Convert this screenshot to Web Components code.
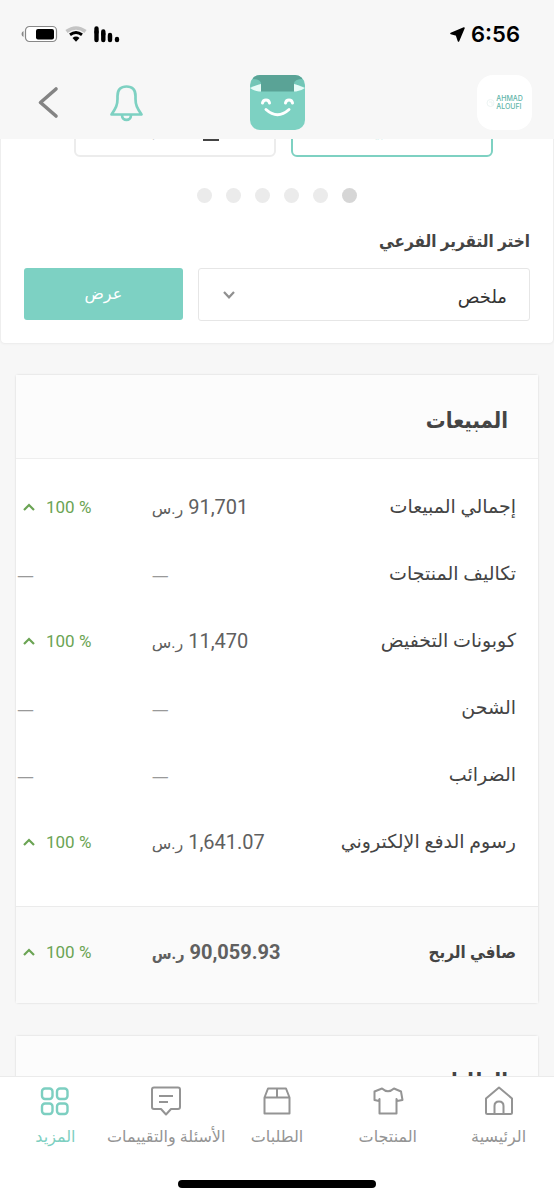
<!DOCTYPE html>
<html lang="ar" dir="rtl">
<head>
<meta charset="utf-8">
<meta name="viewport" content="width=device-width, initial-scale=1">
<title>التقارير</title>
<style>
  body { margin: 0; background: #f7f7f7; color: #444; font-family: Roboto, "DejaVu Sans", sans-serif; font-size: 16px; --heading-font: Roboto, "DejaVu Sans Condensed", "DejaVu Sans", sans-serif; }
</style>
</head>
<body>
<store-app>
  <status-bar slot="top" time="6:56"></status-bar>
  <app-header slot="top"></app-header>
  <report-picker heading="اختر التقرير الفرعي" option="ملخص" action="عرض">
    <report-tab active label="المبيعات"></report-tab>
    <report-tab label="المنتجات"></report-tab>
  </report-picker>
  <report-card heading="المبيعات">
    <report-table></report-table>
  </report-card>
  <report-card heading="الطلبات"></report-card>
  <tab-bar slot="bottom">
    <tab-item icon="home">الرئيسية</tab-item>
    <tab-item icon="shirt">المنتجات</tab-item>
    <tab-item icon="box">الطلبات</tab-item>
    <tab-item icon="chat">الأسئلة والتقييمات</tab-item>
    <tab-item icon="grid" active>المزيد</tab-item>
  </tab-bar>
</store-app>

<script>
const define = (name, render, after) => customElements.define(name, class extends HTMLElement {
  constructor() { super(); this.attachShadow({ mode: 'open' }); }
  connectedCallback() {
    this.shadowRoot.innerHTML = '<style>*{box-sizing:border-box}svg{display:block}</style>' + render(this);
    if (after) after(this.shadowRoot);
  }
});

define('status-bar', el => `
  <style>
    :host { display: flex; direction: ltr; justify-content: space-between; align-items: center; height: 68px; padding: 0 34px 0 20px; color: #000; }
    .group { display: flex; align-items: center; gap: 6px; }
    .time { font: 600 22px/28px Inter, sans-serif; }
  </style>
  <svg width="102" height="20" viewBox="0 0 102 20" aria-hidden="true">
    <rect x="5.5" y="2.5" width="31" height="15" rx="4" fill="#fff" stroke="#888" stroke-width="1.2"/>
    <rect x="16" y="5" width="18" height="10.500" rx="2"/>
    <path d="M3.500 7v6Q1.500 12 1.500 10T3.500 7Z" fill="#888"/>
    <path d="M46.500 7.500Q56 .5 65.500 7.500" fill="none" stroke="#c4c4c4" stroke-width="3.600"/>
    <path d="M50 10.700Q56 6.300 62 10.700" fill="none" stroke="#000" stroke-width="3"/>
    <path d="M52.500 14Q56 11.200 59.500 14L56 17.800Z"/>
    <path d="M76.500 8v8M83.300 10V16M90 13v3M97 15v1" fill="none" stroke="#000" stroke-width="4.400" stroke-linecap="round"/>
    <path d="M76.500 8V4.500M83.300 10V7.500M90 13V11" fill="none" stroke="#000" stroke-width="4.400" stroke-linecap="round"/>
  </svg>
  <div class="group">
    <svg width="15" height="15" viewBox="0 0 15 15" aria-hidden="true"><path d="M14 1 8.500 14 6.500 8 1 6.500Z" stroke="#000" stroke-width="1.600" stroke-linejoin="round"/></svg>
    <span class="time">${el.getAttribute('time')}</span>
  </div>`);

define('app-header', () => `
  <style>
    :host { display: flex; direction: ltr; align-items: center; justify-content: space-between; padding: 7px 22px 9px 34px; }
    .side { flex: 1; display: flex; align-items: center; gap: 46px; }
    .end { justify-content: flex-end; }
    button { display: block; border: 0; padding: 0; background: none; }
    .account { display: grid; grid-template-columns: 9px auto; align-items: center; justify-content: center; gap: 1px; width: 55px; height: 55px; border-radius: 16px; background: #fff; font: 500 7px/8px Inter, sans-serif; color: #5fb5aa; text-align: left; }
    .account span { display: grid; grid-auto-rows: 8px; }
    .account b { font-weight: 500; line-height: 8px; overflow: hidden; }
    .mascot { margin-left: -12px; }
  </style>
  <div class="side">
    <button aria-label="رجوع"><svg width="28" height="34" viewBox="0 0 28 34"><path d="M22 3 6.500 16.500 22 30" fill="none" stroke="#848484" stroke-width="3.600" stroke-linecap="round" stroke-linejoin="round"/></svg></button>
    <button aria-label="الإشعارات"><svg width="36" height="40" viewBox="0 0 36 40" fill="none" stroke="#7ed1c2" stroke-width="2.700" stroke-linejoin="round"><path d="M3.500 31.500C8 25 9.500 22 9.500 16V13C9.500 6.500 13 3.500 18.500 3.500S27.500 6.500 27.500 13V16C27.500 22 29 25 33.500 31.500Z"/><path d="M14 32C14 38.500 23 38.500 23 32"/></svg></button>
  </div>
  <svg class="mascot" width="55" height="55" viewBox="0 0 55 55" aria-hidden="true">
    <clipPath id="tile"><rect width="55" height="55" rx="10"/></clipPath>
    <g clip-path="url(#tile)">
      <rect width="55" height="55" fill="#7dd1c2"/>
      <path d="M3 0H52V5L44 8V16.500H11V8L3 5Z" fill="#5aa396"/>
      <path d="M2 4Q11 4 11 9L0 12Z" fill="#72c6b7"/><path d="M53 4Q44 4 44 9L55 12Z" fill="#72c6b7"/>
      <path d="M0 13Q8 9.500 11 9V16.500H9Q4 16 0 13Z" fill="#e6fbf7"/><path d="M55 13Q47 9.500 44 9V16.500H46Q51 16 55 13Z" fill="#e6fbf7"/>
      <path d="M12.500 28Q13 25 16 25T19.500 28M35.500 28Q36 25 39 25T42.500 28M16 34.500Q27.500 45 39 34.500" fill="none" stroke="#fff" stroke-width="3" stroke-linecap="round"/>
    </g>
  </svg>
  <div class="side end">
    <button class="account"><svg width="9" height="10" viewBox="0 0 9 10" fill="none" stroke="#edf4f3"><circle cx="4.500" cy="5" r="3.500"/><path d="M3 4h3v3"/></svg><span><b>AHMAD</b><b>ALOUFI</b></span></button>
  </div>`);

define('report-tab', el => {
  const on = el.hasAttribute('active');
  return `
  <style>
    :host { display: block; flex: 0 1 202px; }
    button { display: flex; align-items: center; justify-content: center; gap: 14px; width: 100%; height: 60px; padding: 10px 0 0; border: 2px solid ${on ? '#7ed1c2' : '#ececec'}; border-radius: 6px; background: #fff; color: ${on ? '#7ed1c2' : '#444'}; font: inherit; font-size: 16px; line-height: 28px; }
  </style>
  <button aria-pressed="${on}"><svg width="20" height="28" viewBox="0 0 20 28" fill="none" stroke="currentColor" stroke-width="2" aria-hidden="true">${on ? '<path d="M3 18V9M10 18V3M17 18V6"/>' : '<rect x="2" y="4" width="16" height="12"/><path d="M2 22h16"/>'}</svg>${el.getAttribute('label')}</button>`;
});

define('report-picker', el => `
  <style>
    :host { display: block; margin: 0 1px; padding: 10px 23px 22px; background: #fff; border-radius: 4px; box-shadow: 0 0 3px #ddd; }
    .tabs { display: flex; gap: 15px; padding-inline: 37px 50px; }
    .dots { display: flex; justify-content: center; gap: 14px; margin: 31px 0 24px; }
    .dots i { width: 15px; height: 15px; border-radius: 50%; background: #ebebeb; }
    .dots i:first-child { background: #d6d6d6; }
    label { display: block; font: 700 17px/28px var(--heading-font); margin-bottom: 13px; }
    form { display: grid; grid-template-columns: 333fr 159fr; gap: 15px; margin: 0; }
    .field { display: grid; align-items: center; }
    .field > * { grid-area: 1 / 1; }
    select { appearance: none; width: 100%; height: 53px; padding: 4px 22px 0; border: 1px solid #e6e6e6; border-radius: 3px; background: #fff; color: #333; font: inherit; font-size: 18px; line-height: 28px; }
    svg { justify-self: end; margin-inline-end: 24px; pointer-events: none; }
    form button { height: 52px; border: 0; border-radius: 3px; background: #7dd1c3; color: #fff; font: inherit; font-size: 16px; line-height: 28px; }
  </style>
  <div class="tabs"><slot></slot></div>
  <div class="dots"><i></i><i></i><i></i><i></i><i></i><i></i></div>
  <label for="sub">${el.getAttribute('heading')}</label>
  <form>
    <div class="field">
      <select id="sub"><option>${el.getAttribute('option')}</option></select>
      <svg width="14" height="10" viewBox="0 0 14 10" aria-hidden="true"><path d="M2 2 7 7.300 12 2" fill="none" stroke="#909090" stroke-width="2.200"/></svg>
    </div>
    <button type="button">${el.getAttribute('action')}</button>
  </form>`);

define('report-card', el => `
  <style>
    :host { display: block; margin: 31px 15px 0; border: 1px solid #ebebeb; border-radius: 4px; background: #fff; box-shadow: 0 0 2px #eee; }
    h2 { margin: 0; padding: 30px 30px 0; height: 84px; font: 700 22px/32px var(--heading-font); background: #fcfcfc; border-bottom: 1px solid #eee; }
  </style>
  <h2>${el.getAttribute('heading')}</h2>
  <slot></slot>`);

const rows = [
  ['إجمالي المبيعات', '91,701', true],
  ['تكاليف المنتجات', '', false],
  ['كوبونات التخفيض', '11,470', true],
  ['الشحن', '', false],
  ['الضرائب', '', false],
  ['رسوم الدفع الإلكتروني', '1,641.07', true]
];
const change = up => up
  ? `<span class="up"><svg width="14" height="10" viewBox="0 0 14 10" aria-hidden="true"><path d="M2 8 7 3 12 8" fill="none" stroke="#6ba454" stroke-width="2.200"/></svg>100 %</span>`
  : '<span class="none">—</span>';
const line = ([name, sum, up]) => `<tr><th scope="row">${name}</th><td>${sum ? `${sum} <span class="unit">ر.س</span>` : '<span class="none">—</span>'}</td><td class="change">${change(up)}</td></tr>`;

define('report-table', () => `
  <style>
    :host { display: block; }
    table { width: 100%; table-layout: fixed; border-collapse: collapse; }
    col.sum, col.pct { width: 26%; }
    th, td { height: 67px; padding: 0; white-space: nowrap; }
    th { padding-inline-start: 22px; text-align: right; font-weight: 400; font-size: 19px; }
    td { text-align: left; font-size: 20px; color: #606060; }
    .unit { font-size: 16px; }
    .none { font: 17px "DejaVu Sans", sans-serif; color: #999; }
    .change { padding-left: 1px; }
    .up { display: flex; direction: ltr; align-items: center; gap: 10px; padding-left: 5px; color: #6ba454; font-size: 17px; }
    tbody::before { content: ""; display: table-row; height: 14px; }
    tbody::after { content: ""; display: table-row; height: 31px; }
    tfoot { background: #fafafa; border-top: 1px solid #ebebeb; }
    tfoot th, tfoot td { height: 97px; padding-bottom: 6px; font-family: var(--heading-font); font-weight: 700; }
    tfoot th { font-size: 17px; }
    tfoot td.change { font-weight: 400; }
  </style>
  <table>
    <colgroup><col><col class="sum"><col class="pct"></colgroup>
    <tbody>${rows.map(line).join('')}</tbody>
    <tfoot>${line(['صافي الربح', '90,059.93', true])}</tfoot>
  </table>`);

const icons = {
  home: '<path d="M3 13.500 16 2.500 29 13.500V27.500Q29 29 27.500 29H4.500Q3 29 3 27.500Z"/><path d="M11.500 29V21Q11.500 16.500 16 16.500T20.500 21V29"/>',
  shirt: '<path d="M10 3.500Q16 9 22 3.500L29 6.500 30.500 15 25 16 24.500 14V28.500H7.500V14L7 16 2.500 15 2.500 6.500Z"/>',
  box: '<path d="M3.500 12.500 7 3.500H25L28.500 12.500V28.500H3.500ZM3.500 12.500H28.500M16 3.500V12.500"/>',
  chat: '<path d="M4 2.500H28Q30 2.500 30 4.500V22Q30 24 28 24H21L16 29.500 11 24H4Q2 24 2 22V4.500Q2 2.500 4 2.500ZM9 11H23M9 17H18"/>',
  grid: '<rect x="3" y="3.500" width="10.500" height="10.500" rx="3"/><rect x="18" y="3.500" width="10.500" height="10.500" rx="3"/><rect x="3" y="18.500" width="10.500" height="10.500" rx="3"/><rect x="18" y="18.500" width="10.500" height="10.500" rx="3"/>'
};
define('tab-item', el => {
  const on = el.hasAttribute('active');
  return `
  <style>
    :host { display: block; min-width: 0; }
    a { display: flex; flex-direction: column; align-items: center; gap: 8px; color: ${on ? '#7dcfc1' : '#949494'}; text-decoration: none; font-size: 16px; line-height: 24px; white-space: nowrap; }
  </style>
  <a href="#"${on ? ' aria-current="page"' : ''}><svg width="32" height="32" viewBox="0 0 32 32" fill="none" stroke="currentColor" stroke-width="${on ? '2.400' : '2'}" stroke-linejoin="round" aria-hidden="true">${icons[el.getAttribute('icon')]}</svg><slot></slot></a>`;
});

define('tab-bar', () => `
  <style>
    :host { display: block; background: #fff; border-top: 1px solid #ebebeb; padding: 8px 0 12px; }
    nav { display: grid; grid-template-columns: repeat(5, 1fr); }
    .grip { width: 198px; height: 8px; margin: 31px auto 0; border-radius: 4px; background: #000; }
  </style>
  <nav><slot></slot></nav>
  <div class="grip"></div>`);

define('store-app', () => `
  <style>
    :host { display: flex; flex-direction: column; height: 100vh; overflow: hidden; }
    header, footer { flex: none; }
    main { flex: 1; min-height: 0; overflow-y: auto; scrollbar-width: none; }
  </style>
  <header><slot name="top"></slot></header>
  <main><slot></slot></main>
  <footer><slot name="bottom"></slot></footer>`,
  root => { root.querySelector('main').scrollTop = 52; });
</script>
</body>
</html>
